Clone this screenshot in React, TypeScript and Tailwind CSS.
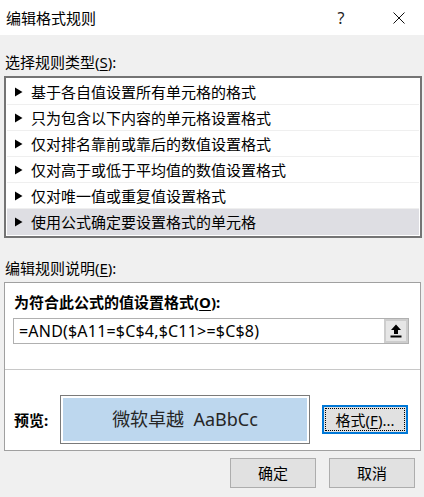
const font = "font-['Microsoft_YaHei','Noto_Sans','Noto_Sans_CJK_SC',sans-serif]";

const ruleTypes = [
  '基于各自值设置所有单元格的格式',
  '只为包含以下内容的单元格设置格式',
  '仅对排名靠前或靠后的数值设置格式',
  '仅对高于或低于平均值的数值设置格式',
  '仅对唯一值或重复值设置格式',
  '使用公式确定要设置格式的单元格',
];

const Arrow = () => (
  <svg width="8" height="10" viewBox="0 0 8 10" className="shrink-0">
    <polygon points="0,0.5 7.5,5 0,9.5" fill="#000" />
  </svg>
);

const App = () => {
  return (
    <div className={`w-[424px] h-[497px] bg-[#f0f0f0] text-[15px] text-black overflow-hidden ${font}`}>
      {/* Title bar */}
      <div className="h-[35px] bg-white flex items-center">
        <span className="pl-[6px] leading-[20px]">编辑格式规则</span>
        <span className="ml-auto w-[46px] text-center text-[16px] leading-[20px] text-[#222]">?</span>
        <div className="ml-[12px] mr-[2px] w-[46px] flex justify-center">
          <svg width="12" height="12" viewBox="0 0 12 12">
            <path d="M0.5 0.5 L11.5 11.5 M11.5 0.5 L0.5 11.5" stroke="#111" strokeWidth="1" />
          </svg>
        </div>
      </div>

      {/* Rule type */}
      <div className="mt-[17px] pl-[5px] h-[20px] leading-[20px]">
        选择规则类型(<span className="underline underline-offset-2">S</span>):
      </div>
      <div className="mt-[4px] ml-[4px] w-[418px] border-2 border-[#747474] bg-white p-px">
        {ruleTypes.map((rule, i) => (
          <div
            key={rule}
            className={`h-[26px] flex items-center gap-[8px] pl-[8px] ${
              i === ruleTypes.length - 1 ? 'bg-[#dedee3]' : 'border-b border-[#efefef]'
            }`}
          >
            <Arrow />
            <span className="leading-[20px]">{rule}</span>
          </div>
        ))}
      </div>

      {/* Rule description */}
      <div className="mt-[20px] pl-[5px] h-[20px] leading-[20px]">
        编辑规则说明(<span className="underline underline-offset-2">E</span>):
      </div>
      <div className="mt-[4px] ml-[4px] w-[417px] border border-[#a0a0a0] bg-white">
        <div className="h-[87px] pt-[9px] border-b border-[#c8c8c8]">
          <div className="pl-[9px] h-[20px] leading-[20px] font-bold">
            为符合此公式的值设置格式(<span className="underline underline-offset-2">O</span>):
          </div>
          <div className="mt-[6px] ml-[8px] w-[396px] h-[26px] border border-[#b0b0b0] flex">
            <div className="flex-1 pl-[5px] flex items-center text-[16px] tracking-[0.2px]">
              =AND($A11=$C$4,$C11&gt;=$C$8)
            </div>
            <div className="w-[24px] h-full border-2 border-[#cdcdcd] bg-[#e6e6e6] flex items-center justify-center">
              <svg width="12" height="14" viewBox="0 0 12 14">
                <path d="M6 0.5 L11 6 L8 6 L8 10 L4 10 L4 6 L1 6 Z" fill="#000" />
                <rect x="0.5" y="11.5" width="11" height="2" fill="#000" />
              </svg>
            </div>
          </div>
        </div>
        <div className="h-[80px] pt-[25px]">
          <div className="flex items-center">
            <span className="ml-[9px] w-[46px] font-bold leading-[20px]">预览:</span>
            <div className="w-[250px] h-[49px] border border-[#7a7a7a] bg-white p-[2px]">
              <div className="w-full h-full bg-[#bdd7ee] flex items-center justify-center text-[18px] text-[#262626]">
                微软卓越&nbsp;&nbsp;AaBbCc
              </div>
            </div>
            <div className="ml-[12px] w-[86px] h-[29px] border-2 border-[#0078d7] bg-[#e1e1e1] p-px">
              <div className="w-full h-full border border-dotted border-black flex items-center justify-center leading-[20px]">
                格式(<span className="underline underline-offset-2">F</span>)...
              </div>
            </div>
          </div>
        </div>
      </div>

      {/* Buttons */}
      <div className="mt-[7px] flex justify-end gap-[13px] pr-[9px]">
        <button className="w-[86px] h-[30px] border border-[#adadad] bg-[#e1e1e1] leading-[20px]">确定</button>
        <button className="w-[86px] h-[30px] border border-[#adadad] bg-[#e1e1e1] leading-[20px]">取消</button>
      </div>
    </div>
  );
};

export default App;
